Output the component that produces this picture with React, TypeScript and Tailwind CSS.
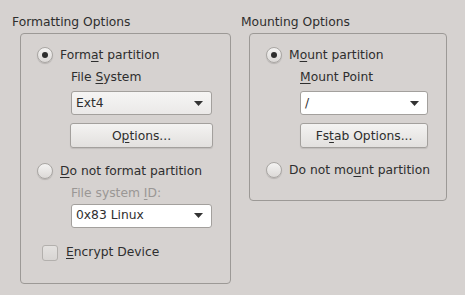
const Radio = ({ checked }: { checked?: boolean }) => (
  <span className="flex h-[16px] w-[16px] shrink-0 items-center justify-center rounded-full border border-[#a9a6a3] bg-gradient-to-b from-[#f4f3f2] to-[#dcd9d7] shadow-[0_1px_1px_rgba(0,0,0,0.15)]">
    {checked && <span className="h-[6px] w-[6px] rounded-full bg-[#2e2e2e]" />}
  </span>
);

const Arrow = () => (
  <svg width="9" height="5" viewBox="0 0 9 5" className="shrink-0">
    <path d="M0 0h9L4.5 5z" fill="#333" />
  </svg>
);

const Combo = ({ label, white }: { label: string; white?: boolean }) => (
  <div
    className={`flex h-[24px] items-center justify-between rounded-[3px] border border-[#a3a09d] pl-[4px] pr-[8px] ${
      white ? 'bg-white' : 'bg-gradient-to-b from-[#f6f5f4] to-[#ebe9e8]'
    }`}
  >
    <span>{label}</span>
    <Arrow />
  </div>
);

const Button = ({ children }: { children: React.ReactNode }) => (
  <div className="flex h-[25px] items-center justify-center rounded-[3px] border border-[#a3a09d] bg-gradient-to-b from-[#f4f3f2] to-[#e2e0de] shadow-[0_1px_1px_rgba(0,0,0,0.1)]">
    {children}
  </div>
);

const U = ({ children }: { children: React.ReactNode }) => <span className="underline underline-offset-2">{children}</span>;

export default function App() {
  return (
    <div
      className="flex h-[295px] w-[465px] gap-[10px] whitespace-nowrap bg-[#d6d2d0] pl-[12px] pt-[16px] text-[12.3px] leading-none text-[#2e2e2e]"
      style={{ fontFamily: '"DejaVu Sans", sans-serif' }}
    >
      {/* Formatting */}
      <div className="flex w-[219px] flex-col">
        <div className="h-[17px]">Formatting Options</div>
        <div className="ml-[8px] flex h-[251px] flex-col rounded-[4px] border border-[#9c9996] pl-[16px] pr-[18px] pt-[13px]">
          <div className="flex items-center gap-[7px]">
            <Radio checked />
            <span>
              Form<U>a</U>t partition
            </span>
          </div>
          <div className="ml-[34px] mt-[8px] flex flex-col">
            <span>
              File <U>S</U>ystem
            </span>
            <div className="mt-[8px]">
              <Combo label="Ext4" />
            </div>
            <div className="mt-[8px] -mx-[1px]">
              <Button>
                O<U>p</U>tions...
              </Button>
            </div>
          </div>
          <div className="mt-[15px] flex items-center gap-[7px]">
            <Radio />
            <span>
              <U>D</U>o not format partition
            </span>
          </div>
          <div className="ml-[34px] mt-[8px] flex flex-col">
            <span className="text-[#9a9795]">
              File system <U>I</U>D:
            </span>
            <div className="mt-[4px]">
              <Combo label="0x83 Linux" white />
            </div>
          </div>
          <div className="ml-[5px] mt-[17px] flex items-center gap-[8px]">
            <span className="h-[16px] w-[16px] rounded-[3px] border border-[#b3b0ad] bg-gradient-to-b from-[#e4e2e0] to-[#d8d5d3]" />
            <span>
              <U>E</U>ncrypt Device
            </span>
          </div>
        </div>
      </div>

      {/* Mounting */}
      <div className="flex w-[206px] flex-col">
        <div className="h-[17px]">Mounting Options</div>
        <div className="ml-[8px] flex h-[168px] flex-col rounded-[4px] border border-[#9c9996] pl-[16px] pr-[18px] pt-[13px]">
          <div className="flex items-center gap-[7px]">
            <Radio checked />
            <span>
              M<U>o</U>unt partition
            </span>
          </div>
          <div className="ml-[34px] mt-[8px] flex flex-col">
            <span>
              <U>M</U>ount Point
            </span>
            <div className="mt-[8px]">
              <Combo label="/" white />
            </div>
            <div className="mt-[8px]">
              <Button>
                Fs<U>t</U>ab Options...
              </Button>
            </div>
          </div>
          <div className="mt-[14px] flex items-center gap-[7px]">
            <Radio />
            <span>
              Do not mo<U>u</U>nt partition
            </span>
          </div>
        </div>
      </div>
    </div>
  );
}
